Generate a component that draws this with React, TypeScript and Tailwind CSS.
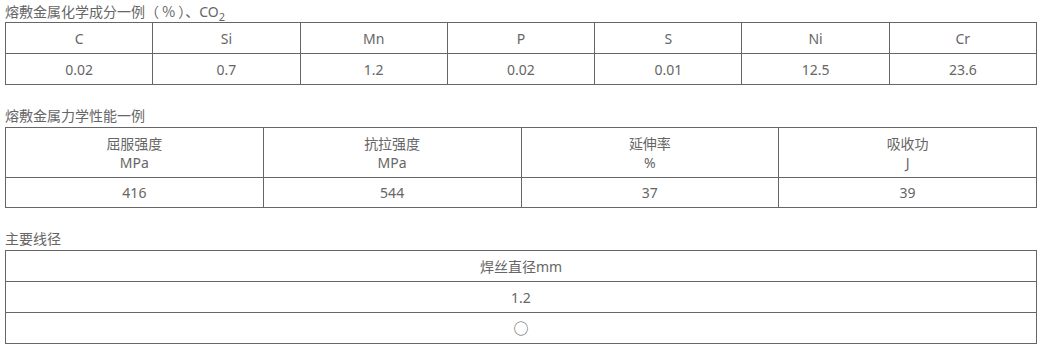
const chem = [
  { name: 'C', value: '0.02' },
  { name: 'Si', value: '0.7' },
  { name: 'Mn', value: '1.2' },
  { name: 'P', value: '0.02' },
  { name: 'S', value: '0.01' },
  { name: 'Ni', value: '12.5' },
  { name: 'Cr', value: '23.6' },
];

const mech = [
  { name: '屈服强度', unit: 'MPa', value: '416' },
  { name: '抗拉强度', unit: 'MPa', value: '544' },
  { name: '延伸率', unit: '%', value: '37' },
  { name: '吸收功', unit: 'J', value: '39' },
];

const cell = 'border border-[#666] text-center align-middle p-0';
const cjk = '[font-family:"Noto_Sans_CJK_SC",sans-serif]';

const Title = ({ children, className = '' }: { children: React.ReactNode; className?: string }) => (
  <p className={`h-[22px] text-[14px] leading-[22px] text-[#666] overflow-visible ${className}`}>{children}</p>
);

const App = () => {
  return (
    <div
      className="px-[5px] text-[14px] text-[#666] bg-white min-h-[351px]"
      style={{ fontFamily: '"Noto Sans", "Noto Sans CJK SC", sans-serif' }}
    >
      <Title>
        熔敷金属化学成分一例<span className={`${cjk} leading-[22px]`}>（ % ）、</span>CO
        <span className="relative top-[4px] text-[11px] leading-none">2</span>
      </Title>
      <table className="w-[1032px] border-collapse table-fixed">
        <tbody>
          <tr className="h-[31px]">
            {chem.map((c) => (
              <td key={c.name} className={cell}>
                {c.name}
              </td>
            ))}
          </tr>
          <tr className="h-[31px]">
            {chem.map((c) => (
              <td key={c.name} className={cell}>
                {c.value}
              </td>
            ))}
          </tr>
        </tbody>
      </table>

      <Title className="mt-[20px]">熔敷金属力学性能一例</Title>
      <table className="w-[1032px] border-collapse table-fixed">
        <tbody>
          <tr className="h-[50px]">
            {mech.map((m) => (
              <td key={m.name} className={`${cell} leading-[19px]`}>
                <div>{m.name}</div>
                <div>{m.unit}</div>
              </td>
            ))}
          </tr>
          <tr className="h-[30px]">
            {mech.map((m) => (
              <td key={m.name} className={cell}>
                {m.value}
              </td>
            ))}
          </tr>
        </tbody>
      </table>

      <Title className="mt-[20px] h-[21px] leading-[21px]">主要线径</Title>
      <table className="w-[1032px] border-collapse table-fixed">
        <tbody>
          <tr className="h-[31px]">
            <td className={cell}>焊丝直径mm</td>
          </tr>
          <tr className="h-[31px]">
            <td className={cell}>1.2</td>
          </tr>
          <tr className="h-[31px]">
            <td className={cell}>
              <span className={`${cjk} text-[15px] leading-none`}>○</span>
            </td>
          </tr>
        </tbody>
      </table>
    </div>
  );
};

export default App;
